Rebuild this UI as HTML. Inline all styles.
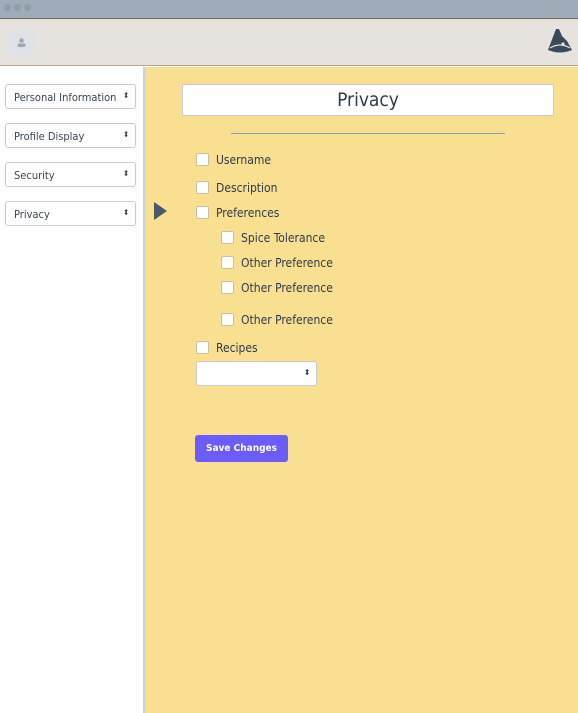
<!DOCTYPE html><html><head><style>
*{box-sizing:border-box;margin:0;padding:0}
body{width:578px;height:713px;overflow:hidden;font-family:"DejaVu Sans Condensed","Liberation Sans",sans-serif;color:#2f3a4a;position:relative;background:#fff}
.tb{position:absolute;left:0;top:0;width:578px;height:19px;background:#9dacb8;border-bottom:1px solid #7a6a55}
.dot{position:absolute;top:4px;width:7px;height:7px;border-radius:50%;background:#8e9dab}
.hd{position:absolute;left:0;top:19px;width:578px;height:47px;background:#e6e3de;border-bottom:1px solid #b8a888}
.av{position:absolute;left:8px;top:10px;width:27px;height:27px;border-radius:8px;background:#e0e3e6}
.side{position:absolute;left:0;top:67px;width:145px;height:646px;background:#fff;border-right:2px solid #c8d2dc}
.sel{position:absolute;left:5px;width:131px;height:25px;border:1px solid #c8ccd0;border-radius:3px;background:#fff;font-size:11px;padding:6px 0 0 8px;color:#3a4555}
.sel:after,.s2:after{content:"⬍";position:absolute;right:6px;top:6px;font-size:8px}
.main{position:absolute;left:145px;top:67px;width:433px;height:646px;background:#f9df90}
.title{position:absolute;left:37px;top:17px;width:372px;height:32px;background:#fff;border:1px solid #c8ccd0;text-align:center;font-size:19px;line-height:30px}
.hr{position:absolute;left:86px;top:66px;width:274px;height:1px;background:#8aa0b4}
.cb{position:absolute;font-size:12px;line-height:14px}
.cb i{display:inline-block;width:13px;height:13px;background:#fff;border:1px solid #c8c0a0;border-radius:2px;vertical-align:-2px;margin-right:7px}
.s2{position:absolute;left:51px;top:294px;width:121px;height:25px;background:#fff;border:1px solid #c8ccd0;border-radius:3px}
.btn{position:absolute;left:50px;top:368px;width:93px;height:27px;background:#6b5cff;border-radius:3px;color:#fff;font-size:10px;font-weight:bold;text-align:center;line-height:27px}
</style></head><body>
<div class="tb"><div class="dot" style="left:4px"></div><div class="dot" style="left:14px"></div><div class="dot" style="left:24px"></div></div>
<div class="hd"><div class="av"><svg width="27" height="27"><circle cx="13.5" cy="11.5" r="2.3" fill="#9aaabb"/><rect x="9.5" y="14.5" width="8" height="3.5" rx="1.5" fill="#9aaabb"/></svg></div>
<svg style="position:absolute;left:546px;top:9px" width="28" height="28"><path d="M10 1 L13 1 L16 8 L21 13 L26 22 Q14 27 2 22 Z" fill="#3b4a5a"/><circle cx="17" cy="16" r="1.6" fill="#e6e3de"/><path d="M4 20 Q14 14 24 20" stroke="#e6e3de" stroke-width="1.3" fill="none"/></svg></div>
<div class="side">
<div class="sel" style="top:17px">Personal Information</div>
<div class="sel" style="top:56px">Profile Display</div>
<div class="sel" style="top:95px">Security</div>
<div class="sel" style="top:134px">Privacy</div>
</div>
<div class="main">
<div class="title">Privacy</div><div class="hr"></div>
<svg style="position:absolute;left:9px;top:135px" width="14" height="18"><path d="M0 0 L13 9 L0 18Z" fill="#4a5868"/></svg>
<div class="cb" style="left:51px;top:86px"><i></i>Username</div>
<div class="cb" style="left:51px;top:114px"><i></i>Description</div>
<div class="cb" style="left:51px;top:139px"><i></i>Preferences</div>
<div class="cb" style="left:76px;top:164px"><i></i>Spice Tolerance</div>
<div class="cb" style="left:76px;top:189px"><i></i>Other Preference</div>
<div class="cb" style="left:76px;top:214px"><i></i>Other Preference</div>
<div class="cb" style="left:76px;top:246px"><i></i>Other Preference</div>
<div class="cb" style="left:51px;top:274px"><i></i>Recipes</div>
<div class="s2"></div>
<div class="btn">Save Changes</div>
</div>
</body></html>
